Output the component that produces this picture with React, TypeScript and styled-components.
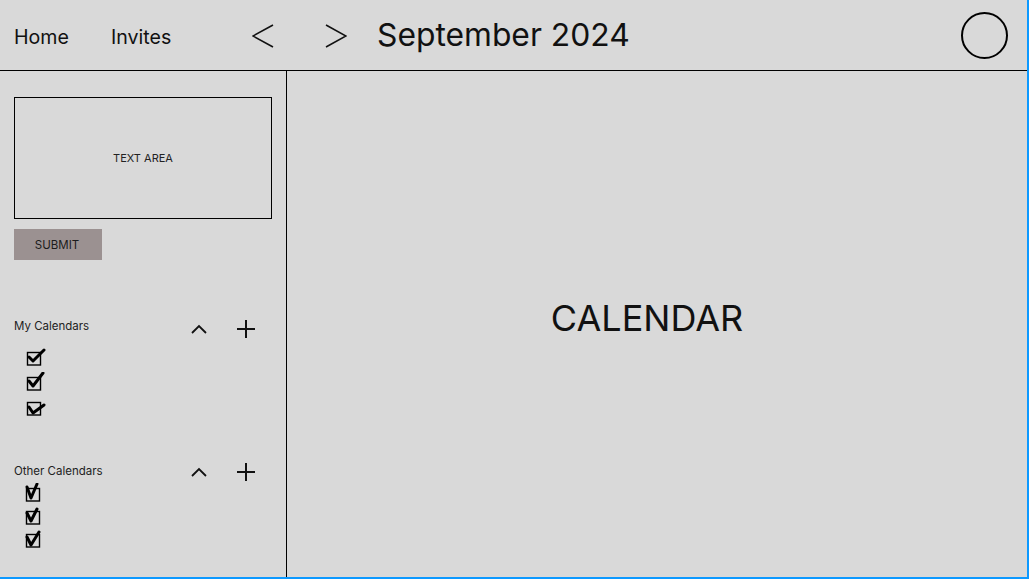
import React from "react";
import styled, { createGlobalStyle } from "styled-components";

const Global = createGlobalStyle`
  html, body { margin: 0; padding: 0; }
  body { font-family: Inter, "Noto Sans", sans-serif; color: #000; background: #fff; }
  * { box-sizing: border-box; }
`;

const Frame = styled.div`
  width: 1029px;
  height: 579px;
  background: #d9d9d9;
  border-right: 2px solid #0d99ff;
  border-bottom: 2px solid #0d99ff;
  display: flex;
  flex-direction: column;
  overflow: hidden;
`;

const Header = styled.header`
  height: 71px;
  flex: none;
  border-bottom: 1px solid #000;
  display: flex;
  align-items: center;
  padding: 0 19px 0 14px;
`;

const NavLink = styled.span<{ $w: number }>`
  width: ${(p) => p.$w}px;
  font-size: 19.6px;
  line-height: 24px;
  margin-top: 4px;
  color: #111;
`;

const ArrowButton = styled.button<{ $mr: number }>`
  border: none;
  background: none;
  padding: 0;
  margin-right: ${(p) => p.$mr}px;
  width: 22px;
  height: 24px;
  display: flex;
  margin-top: 1px;
`;

const Month = styled.h1`
  margin: 0 0 0 -1px;
  font-size: 31.8px;
  font-weight: 400;
  line-height: 38px;
  color: #111;
  flex: 1;
`;

const Avatar = styled.div`
  width: 47px;
  height: 47px;
  border: 2px solid #000;
  border-radius: 50%;
`;

const Body = styled.div`
  flex: 1;
  display: flex;
  min-height: 0;
`;

const Sidebar = styled.aside`
  width: 287px;
  flex: none;
  border-right: 1px solid #000;
  padding: 26px 15px 0 14px;
  display: flex;
  flex-direction: column;
`;

const TextArea = styled.div`
  height: 122px;
  width: 258px;
  border: 1px solid #000;
  display: flex;
  align-items: center;
  justify-content: center;
  font-size: 11px;
  color: #222;
`;

const SubmitButton = styled.button`
  margin-top: 10px;
  width: 88px;
  height: 31px;
  border: none;
  background: #9b9191;
  font-family: Inter, "Noto Sans", sans-serif;
  font-size: 11.5px;
  color: #1c1c1c;
  padding: 0 2px 0 0;
`;

const Section = styled.section<{ $mt: number }>`
  margin-top: ${(p) => p.$mt}px;
`;

const SectionHead = styled.div`
  display: grid;
  grid-template-columns: 177px 45px 20px;
  align-items: center;
  height: 22px;
`;

const SectionTitle = styled.span<{ $dy: number }>`
  font-size: 11.5px;
  color: #222;
  margin-top: ${(p) => p.$dy}px;
`;

const CheckList = styled.ul<{ $mt: number; $row: number; $indent: number }>`
  list-style: none;
  margin: ${(p) => p.$mt}px 0 0;
  padding: 0 0 0 ${(p) => p.$indent}px;
  li {
    height: ${(p) => p.$row}px;
    display: flex;
    align-items: center;
  }
`;

const IconSvg = styled.svg`
  display: block;
`;

const ChevronLeft = () => (
  <IconSvg width="22" height="24" viewBox="0 0 22 24">
    <path d="M21 1 L1 12 L21 23" fill="none" stroke="#111" strokeWidth="1.6" />
  </IconSvg>
);
const ChevronRight = () => (
  <IconSvg width="22" height="24" viewBox="0 0 22 24">
    <path d="M1 1 L21 12 L1 23" fill="none" stroke="#111" strokeWidth="1.6" />
  </IconSvg>
);
const ChevronUp = () => (
  <IconSvg width="16" height="10" viewBox="0 0 16 10">
    <path d="M1 9 L8 2 L15 9" fill="none" stroke="#111" strokeWidth="1.8" />
  </IconSvg>
);
const Plus = () => (
  <IconSvg width="20" height="20" viewBox="0 0 20 20">
    <path d="M10 1 V19 M1 10 H19" fill="none" stroke="#111" strokeWidth="2" />
  </IconSvg>
);

const Check = ({ v }: { v: number }) => {
  const checks = [
    "M3 10 L7 14 L18 3",
    "M3 9 L7 14 L17 1",
    "M3 10 L7 16 L18 8",
    "M2 4 L6 15 L12 1",
    "M2 7 L6 15 L12 3",
    "M2 8 L6 16 L14 3",
  ];
  return (
    <IconSvg width="20" height="20" viewBox="0 0 20 20">
      <rect x="1.5" y="5.5" width="13" height="12.5" fill="none" stroke="#000" strokeWidth="1.4" />
      <path d={checks[v]} fill="none" stroke="#000" strokeWidth="3" strokeLinejoin="round" strokeLinecap="round" />
    </IconSvg>
  );
};

const Main = styled.main`
  flex: 1;
  display: flex;
  align-items: center;
  justify-content: center;
  padding: 0 20px 12px 0;
`;

const MainLabel = styled.div`
  font-size: 36px;
  color: #111;
`;

export default function App() {
  return (
    <>
      <Global />
      <Frame>
        <Header>
          <NavLink $w={97}>Home</NavLink>
          <NavLink $w={141}>Invites</NavLink>
          <ArrowButton $mr={51} aria-label="Previous month">
            <ChevronLeft />
          </ArrowButton>
          <ArrowButton $mr={31} aria-label="Next month">
            <ChevronRight />
          </ArrowButton>
          <Month>September 2024</Month>
          <Avatar />
        </Header>
        <Body>
          <Sidebar>
            <TextArea>TEXT AREA</TextArea>
            <SubmitButton>SUBMIT</SubmitButton>
            <Section $mt={58}>
              <SectionHead>
                <SectionTitle $dy={-6}>My Calendars</SectionTitle>
                <ChevronUp />
                <Plus />
              </SectionHead>
              <CheckList $mt={4} $row={25} $indent={12}>
                <li><Check v={0} /></li>
                <li><Check v={1} /></li>
                <li><Check v={2} /></li>
              </CheckList>
            </Section>
            <Section $mt={42}>
              <SectionHead>
                <SectionTitle $dy={-2}>Other Calendars</SectionTitle>
                <ChevronUp />
                <Plus />
              </SectionHead>
              <CheckList $mt={-2} $row={23} $indent={11}>
                <li><Check v={3} /></li>
                <li><Check v={4} /></li>
                <li><Check v={5} /></li>
              </CheckList>
            </Section>
          </Sidebar>
          <Main>
            <MainLabel>CALENDAR</MainLabel>
          </Main>
        </Body>
      </Frame>
    </>
  );
}
